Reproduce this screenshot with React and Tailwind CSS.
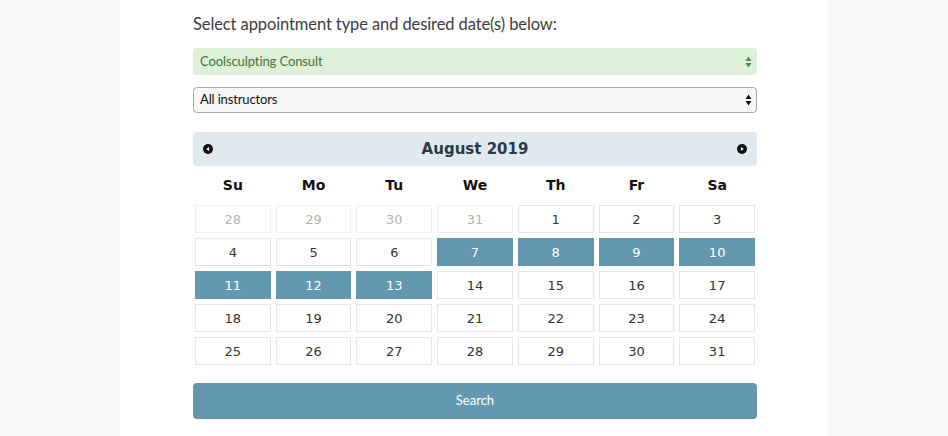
import React from "react";

const days = [
  [28, 29, 30, 31, 1, 2, 3],
  [4, 5, 6, 7, 8, 9, 10],
  [11, 12, 13, 14, 15, 16, 17],
  [18, 19, 20, 21, 22, 23, 24],
  [25, 26, 27, 28, 29, 30, 31],
];
const selected = new Set([7, 8, 9, 10, 11, 12, 13]);
const weekdays = ["Su", "Mo", "Tu", "We", "Th", "Fr", "Sa"];

function Arrows({ color }) {
  return (
    <svg width="7" height="12" viewBox="0 0 7 12" className="shrink-0">
      <path d="M3.5 0.5 L6.5 5 L0.5 5 Z" fill={color} />
      <path d="M3.5 11.5 L6.5 7 L0.5 7 Z" fill={color} />
    </svg>
  );
}

function Nav({ dir }) {
  return (
    <svg width="10" height="10" viewBox="0 0 10 10">
      <circle cx="5" cy="5" r="5" fill="#111" />
      {dir === "prev" ? (
        <path d="M3.2 5 L6.1 3 L6.1 7 Z" fill="#fff" />
      ) : (
        <path d="M6.8 5 L3.9 3 L3.9 7 Z" fill="#fff" />
      )}
    </svg>
  );
}

export default function App() {
  return (
    <div className="min-h-[436px] w-full bg-[#f7f9f9]">
      <div className="mx-auto w-[708px] bg-white pl-[73px] pr-[71px] pt-[13px] pb-[20px] min-h-[436px]">
        <div
          className="text-[16.5px] leading-[22px] tracking-[-0.1px] text-[#3d3d3d]"
          style={{ fontFamily: "Lato, sans-serif" }}
        >
          Select appointment type and desired date(s) below:
        </div>

        <div
          className="mt-[13px] flex h-[27px] items-center justify-between rounded-[4px] bg-[#dff0d8] pl-[7px] pr-[5px] text-[13px] tracking-[-0.1px] text-[#3c763d]"
          style={{ fontFamily: "Lato, sans-serif" }}
        >
          <span>Coolsculpting Consult</span>
          <Arrows color="#4b8a4f" />
        </div>

        <div
          className="mt-[12px] flex h-[26px] items-center justify-between rounded-[4px] border border-[#a9a9a9] bg-[#f6f6f6] pl-[6px] pr-[4px] text-[13px] tracking-[-0.15px] text-[#111]"
          style={{ fontFamily: "Lato, sans-serif" }}
        >
          <span>All instructors</span>
          <Arrows color="#111" />
        </div>

        <div style={{ fontFamily: "'DejaVu Sans', Verdana, sans-serif" }}>
          <div className="mt-[19px] flex h-[34px] items-center justify-between rounded-[4px] bg-[#dfe9ee] px-[10px]">
            <Nav dir="prev" />
            <span className="pt-px text-[15px] font-bold text-[#2b3a45]">August 2019</span>
            <Nav dir="next" />
          </div>

          <div className="mt-[2px] mb-[3px] grid h-[34px] grid-cols-7 items-center gap-x-[5px] px-[2px]">
            {weekdays.map((d) => (
              <div key={d} className="text-center text-[14px] font-bold text-[#111]">
                {d}
              </div>
            ))}
          </div>

          <div className="grid grid-cols-7 gap-[5px] px-[2px]">
            {days.map((row, ri) =>
              row.map((d, ci) => {
                const muted = ri === 0 && d > 20;
                const sel = !muted && selected.has(d);
                return (
                  <div
                    key={`${ri}-${ci}`}
                    className={
                      "flex h-[28px] items-center justify-center border pt-px text-[13px] " +
                      (sel
                        ? "border-[#6398ae] bg-[#6398ae] text-white"
                        : muted
                        ? "border-[#eef0f1] bg-white text-[#b3b3b3]"
                        : "border-[#e3e7e9] bg-white text-[#333]")
                    }
                  >
                    {d}
                  </div>
                );
              })
            )}
          </div>
        </div>

        <div
          className="mt-[18px] flex h-[36px] items-center justify-center rounded-[4px] bg-[#6398ae] text-[13px] text-white"
          style={{ fontFamily: "Lato, sans-serif" }}
        >
          Search
        </div>
      </div>
    </div>
  );
}
